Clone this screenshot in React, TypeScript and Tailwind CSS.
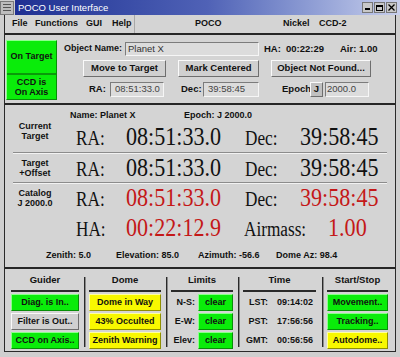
import React from "react";

const raised =
  "border border-t-[#fafafa] border-l-[#fafafa] border-r-[#6e6e6e] border-b-[#6e6e6e]";
const sunken =
  "border border-t-[#7c7c7c] border-l-[#7c7c7c] border-r-[#f6f6f6] border-b-[#f6f6f6]";
const greenBtn =
  "bg-[#0aec0a] border border-t-[#8cff8c] border-l-[#8cff8c] border-r-[#078f07] border-b-[#078f07]";
const yellowBtn =
  "bg-[#f8f800] border border-t-[#ffffa0] border-l-[#ffffa0] border-r-[#8f8f00] border-b-[#8f8f00]";
const greyBtn = "bg-[#d0d0d0] " + raised;

const serif = "font-['Liberation_Serif','Times_New_Roman',serif]";

function TitleBar() {
  return (
    <div className="h-[15px] shrink-0 flex items-center bg-[#cfcfcf]">
      <div className="w-[14px] h-[14px] shrink-0 bg-[#bdbdbd] border border-[#7a7a7a] flex flex-col justify-center gap-[2px] px-[2px]">
        <div className="h-[1px] bg-[#555]" />
        <div className="h-[1px] bg-[#555]" />
        <div className="h-[1px] bg-[#555]" />
      </div>
      <div className="ml-[1px] h-[15px] flex-1 bg-linear-to-r from-[#1f2f92] via-[#5062b6] to-[#c9d0ec] flex items-center">
        <span className="ml-[3px] text-white text-[9.5px] leading-[15px] whitespace-nowrap">POCO User Interface</span>
        <div className="ml-auto mr-[3px] flex gap-[1px]">
          <div className="w-[11px] h-[11px] bg-[#c8c8c8] border border-[#777] flex items-end justify-center pb-[2px]">
            <div className="w-[5px] h-[2px] bg-black" />
          </div>
          <div className="w-[11px] h-[11px] bg-[#c8c8c8] border border-[#777] flex items-center justify-center">
            <div className="w-[7px] h-[6px] border border-black border-t-2" />
          </div>
          <div className="w-[11px] h-[11px] bg-[#c8c8c8] border border-[#777] flex items-center justify-center">
            <svg width="7" height="7" viewBox="0 0 7 7">
              <path d="M0.5 0.5 L6.5 6.5 M6.5 0.5 L0.5 6.5" stroke="#000" strokeWidth="1.3" />
            </svg>
          </div>
        </div>
      </div>
    </div>
  );
}

function MenuBar() {
  return (
    <div className="h-[18px] flex items-center text-[9px] font-bold whitespace-nowrap">
      <div className="h-[18px] w-[130px] shrink-0 flex items-center border-r border-r-[#a8a8a8]">
        <span className="ml-[7px] w-[23px]">File</span>
        <span className="w-[51px]">Functions</span>
        <span className="w-[26px]">GUI</span>
        <span>Help</span>
      </div>
      <span className="ml-[60px] w-[88px]">POCO</span>
      <span className="w-[36px]">Nickel</span>
      <span>CCD-2</span>
    </div>
  );
}

function TopPanel() {
  return (
    <div className="h-[68px] flex text-[9.5px] font-bold whitespace-nowrap">
      <div className={"ml-[1px] mt-[5px] w-[51px] h-[60px] shrink-0 flex flex-col " + greenBtn}>
        <div className="h-[34px] flex items-center justify-center border-b-2 border-b-[#0a9a0a] text-[9px]">
          On Target
        </div>
        <div className="flex-1 flex flex-col items-center justify-center text-[9px] leading-[10px]">
          <span>CCD is</span>
          <span>On Axis</span>
        </div>
      </div>
      <div className="flex flex-col pt-[7px]">
        <div className="h-[14px] flex items-center">
          <span className="ml-[7px] w-[61px] shrink-0 text-[9px]">Object Name:</span>
          <div className={"w-[134px] h-[14px] shrink-0 bg-[#dcdcdc] font-normal text-[#333] pl-[2px] flex items-center " + sunken}>
            Planet X
          </div>
          <span className="ml-[5px] w-[22px] shrink-0">HA:</span>
          <span className="w-[54px] shrink-0">00:22:29</span>
          <span>Air: 1.00</span>
        </div>
        <div className="mt-[4px] h-[17px] flex items-center">
          <div className={"ml-[26px] w-[83px] h-[17px] shrink-0 flex items-center justify-center " + greyBtn}>
            Move to Target
          </div>
          <div className={"ml-[12px] w-[81px] h-[17px] shrink-0 flex items-center justify-center " + greyBtn}>
            Mark Centered
          </div>
          <div className={"ml-[12px] w-[100px] h-[17px] shrink-0 flex items-center justify-center " + greyBtn}>
            Object Not Found...
          </div>
        </div>
        <div className="mt-[5px] h-[15px] flex items-center">
          <span className="ml-[32px] w-[21px] shrink-0">RA:</span>
          <div className={"w-[54px] h-[15px] shrink-0 bg-[#dcdcdc] font-normal text-[#444] pl-[4px] flex items-center " + sunken}>
            08:51:33.0
          </div>
          <span className="ml-[17px] w-[22px] shrink-0">Dec:</span>
          <div className={"w-[56px] h-[15px] shrink-0 bg-[#dcdcdc] font-normal text-[#444] pl-[4px] flex items-center " + sunken}>
            39:58:45
          </div>
          <span className="ml-[23px] w-[28px] shrink-0">Epoch</span>
          <div className={"w-[13px] h-[15px] shrink-0 bg-[#c0c0c0] flex items-center justify-center " + raised}>J</div>
          <div className={"ml-[2px] w-[44px] h-[15px] shrink-0 bg-[#dcdcdc] font-normal text-[#444] pl-[1px] flex items-center " + sunken}>
            2000.0
          </div>
        </div>
      </div>
    </div>
  );
}

function Big({ children, red, size }: { children: React.ReactNode; red?: boolean; size: "label" | "value" }) {
  return (
    <span
      className={
        "inline-block origin-left whitespace-nowrap leading-[30px] " +
        serif +
        " " +
        (size === "label" ? "text-[20px] scale-x-[0.86] " : "text-[26px] scale-x-[0.85] ") +
        (red ? "text-[#c41818]" : "text-[#111]")
      }
    >
      {children}
    </span>
  );
}

function CoordRow({ red }: { red?: boolean }) {
  return (
    <div className="h-[30px] flex items-baseline">
      <div className="ml-[19px] w-[50px] shrink-0">
        <Big size="label">RA:</Big>
      </div>
      <div className="w-[119px] shrink-0">
        <Big size="value" red={red}>08:51:33.0</Big>
      </div>
      <div className="w-[55px] shrink-0">
        <Big size="label">Dec:</Big>
      </div>
      <div>
        <Big size="value" red={red}>39:58:45</Big>
      </div>
    </div>
  );
}

function RowLabel({ a, b }: { a: string; b: string }) {
  return (
    <div className="w-[44px] shrink-0 flex flex-col items-center justify-center text-[9px] font-bold leading-[10px] whitespace-nowrap">
      <span>{a}</span>
      <span>{b}</span>
    </div>
  );
}

function MiddlePanel() {
  return (
    <div className="h-[162px] flex flex-col pt-[5px] px-[8px]">
      <div className="flex border-b border-b-[#8c8c8c] shadow-[0_1px_0_#f2f2f2]">
        <RowLabel a="Current" b="Target" />
        <div className="flex flex-col">
          <div className="h-[12px] flex items-center text-[9px] font-bold whitespace-nowrap">
            <span className="ml-[13px] w-[114px] shrink-0">Name: Planet X</span>
            <span>Epoch: J 2000.0</span>
          </div>
          <CoordRow />
        </div>
      </div>
      <div className="h-[30px] flex border-b border-b-[#8c8c8c] shadow-[0_1px_0_#f2f2f2]">
        <RowLabel a="Target" b="+Offset" />
        <CoordRow />
      </div>
      <div className="h-[30px] flex">
        <RowLabel a="Catalog" b="J 2000.0" />
        <CoordRow red />
      </div>
      <div className="h-[30px] flex">
        <div className="w-[44px] shrink-0" />
        <div className="h-[30px] flex items-baseline">
          <div className="ml-[19px] w-[50px] shrink-0">
            <Big size="label">HA:</Big>
          </div>
          <div className="w-[118px] shrink-0">
            <Big size="value" red>00:22:12.9</Big>
          </div>
          <div className="w-[84px] shrink-0">
            <Big size="label">Airmass:</Big>
          </div>
          <div>
            <Big size="value" red>1.00</Big>
          </div>
        </div>
      </div>
      <div className="flex-1 flex items-center pt-[2px] text-[9px] font-bold whitespace-nowrap">
        <span className="ml-[33px] w-[70px] shrink-0">Zenith: 5.0</span>
        <span className="w-[82px] shrink-0">Elevation: 85.0</span>
        <span className="w-[78px] shrink-0">Azimuth: -56.6</span>
        <span>Dome Az: 98.4</span>
      </div>
    </div>
  );
}

function Col({ title, className, children }: { title: string; className: string; children: React.ReactNode }) {
  return (
    <div className={"flex flex-col shrink-0 " + className}>
      <div className="mt-[4px] h-[14px] flex items-center justify-center text-[9.5px] font-bold whitespace-nowrap">{title}</div>
      <div className="mt-[3px] h-[2px] bg-[#2a2a2a]" />
      <div className="mt-[2px] flex flex-col gap-[2px]">{children}</div>
    </div>
  );
}

function Sep({ className }: { className: string }) {
  return (
    <div
      className={
        "mt-[8px] h-[70px] w-[2px] shrink-0 border-l border-l-[#2a2a2a] border-r border-r-[#8a8a8a] " + className
      }
    />
  );
}

function B({ kind, children }: { kind: "g" | "y" | "n"; children: React.ReactNode }) {
  const c = kind === "g" ? greenBtn : kind === "y" ? yellowBtn : greyBtn;
  return (
    <div className={"h-[17px] flex items-center justify-center text-[9px] font-bold whitespace-nowrap " + c}>
      {children}
    </div>
  );
}

function BottomPanel() {
  return (
    <div className="h-[82px] flex">
      <Col title="Guider" className="ml-[6px] w-[68px]">
        <B kind="g">Diag. is In..</B>
        <B kind="n">Filter is Out..</B>
        <B kind="g">CCD on Axis..</B>
      </Col>
      <Sep className="ml-[5px]" />
      <Col title="Dome" className="ml-[3px] w-[72px]">
        <B kind="y">Dome in Way</B>
        <B kind="y">43% Occulted</B>
        <B kind="y">Zenith Warning</B>
      </Col>
      <Sep className="ml-[5px]" />
      <Col title="Limits" className="ml-[3px] w-[62px]">
        {["N-S:", "E-W:", "Elev:"].map((l) => (
          <div key={l} className="h-[17px] flex items-center">
            <span className="w-[27px] shrink-0 pr-[3px] text-right text-[9px] font-bold">{l}</span>
            <div className={"w-[35px] h-[17px] shrink-0 flex items-center justify-center text-[9px] font-bold " + greenBtn}>
              clear
            </div>
          </div>
        ))}
      </Col>
      <Sep className="ml-[5px]" />
      <Col title="Time" className="ml-[3px] w-[73px]">
        {[
          ["LST:", "09:14:02"],
          ["PST:", "17:56:56"],
          ["GMT:", "00:56:56"],
        ].map(([l, v]) => (
          <div key={l} className="h-[17px] flex items-center text-[9px] font-bold whitespace-nowrap">
            <span className="w-[27px] shrink-0 pr-[2px] text-right">{l}</span>
            <span className="ml-[7px]">{v}</span>
          </div>
        ))}
      </Col>
      <Sep className="ml-[6px]" />
      <Col title="Start/Stop" className="ml-[3px] w-[61px]">
        <B kind="g">Movement..</B>
        <B kind="g">Tracking..</B>
        <B kind="y">Autodome..</B>
      </Col>
    </div>
  );
}

export default function App() {
  return (
    <div className="w-[400px] h-[357px] overflow-hidden bg-[#d4d4d4] font-['Liberation_Sans',Arial,sans-serif] text-[#111] text-left flex flex-col select-none">
      <TitleBar />
      <div className="flex-1 flex flex-col px-[4px] pb-[5px] bg-[#cfcfcf]">
        <div className="flex-1 flex flex-col border-x border-b border-[#2a2a2a] bg-[#d4d4d4]">
          <MenuBar />
          <div className="h-[2px] bg-[#262626]" />
          <TopPanel />
          <div className="h-[2px] bg-[#262626]" />
          <MiddlePanel />
          <div className="h-[2px] bg-[#262626]" />
          <BottomPanel />
        </div>
      </div>
    </div>
  );
}
